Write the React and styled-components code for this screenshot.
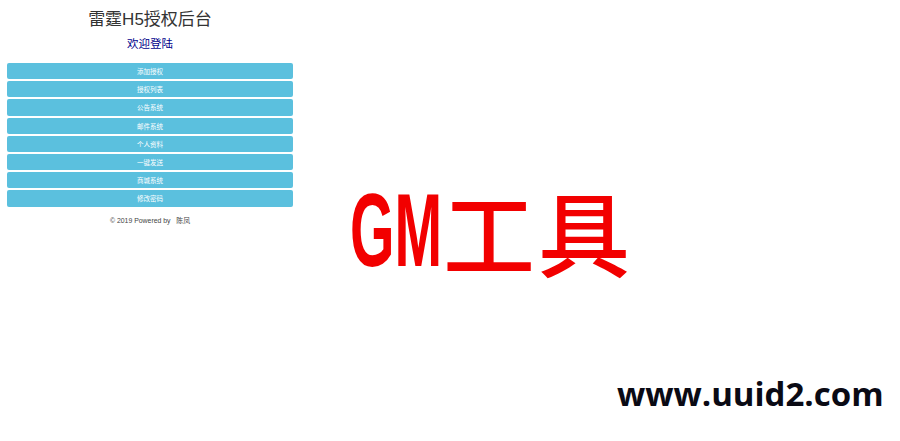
import React from 'react'
import styled, { createGlobalStyle } from 'styled-components'

const GlobalStyle = createGlobalStyle`
    html, body {
        margin: 0;
        padding: 0;
        background: #fff;
    }
    body {
        font-family: "Liberation Sans", "Noto Sans CJK SC", sans-serif;
    }
`

const Page = styled.div`
    position: relative;
    width: 900px;
    height: 441px;
    overflow: hidden;
    background: #fff;
`

const Panel = styled.div`
    width: 300px;
    box-sizing: border-box;
    padding: 9px 7px 0;
    display: flex;
    flex-direction: column;
    align-items: center;
`

const Title = styled.h1`
    margin: 0;
    font-size: 17px;
    line-height: 22px;
    font-weight: 400;
    color: #333;
    text-align: center;
`

const Welcome = styled.a`
    margin-top: 5px;
    font-size: 11.5px;
    line-height: 16px;
    color: #00008b;
    text-align: center;
`

const Menu = styled.div`
    margin-top: 11px;
    width: 100%;
    display: flex;
    flex-direction: column;
    gap: 2px;
`

const MenuButton = styled.a`
    display: flex;
    align-items: center;
    justify-content: center;
    height: 16.2px;
    border-radius: 2px;
    background: #5bc0de;
    color: #fff;
    font-size: 6.5px;
`

const Footer = styled.p`
    margin: 7px 0 0;
    font-size: 6.9px;
    line-height: 14px;
    color: #444;
    text-align: center;
`

const Stamp = styled.div`
    position: absolute;
    left: 350px;
    top: 175px;
    display: flex;
    align-items: center;
    height: 110px;
    color: #f20000;
`

const StampLatin = styled.span`
    display: inline-block;
    width: 93px;
    font-size: 104px;
    font-weight: 700;
    line-height: 110px;
    transform: scaleX(0.55);
    transform-origin: left center;
`

const StampCjk = styled.span`
    font-family: "Noto Sans CJK SC", sans-serif;
    font-size: 92px;
    font-weight: 500;
    line-height: 110px;
    letter-spacing: 3px;
    white-space: nowrap;
`

const SiteMark = styled.div`
    position: absolute;
    left: 617px;
    top: 372px;
    font-family: "Open Sans", "Noto Sans", sans-serif;
    font-size: 33px;
    font-weight: 700;
    line-height: 44px;
    color: #0a0a14;
`

const menuItems = ['添加授权', '授权列表', '公告系统', '邮件系统', '个人资料', '一键发送', '商城系统', '修改密码']

export default function App() {
    return (
        <Page>
            <GlobalStyle />
            <Panel>
                <Title>雷霆H5授权后台</Title>
                <Welcome>欢迎登陆</Welcome>
                <Menu>
                    {menuItems.map((item) => (
                        <MenuButton key={item}>{item}</MenuButton>
                    ))}
                </Menu>
                <Footer>© 2019 Powered by &nbsp; 陈凤</Footer>
            </Panel>
            <Stamp>
                <StampLatin>GM</StampLatin>
                <StampCjk>工具</StampCjk>
            </Stamp>
            <SiteMark>www.uuid2.com</SiteMark>
        </Page>
    )
}
